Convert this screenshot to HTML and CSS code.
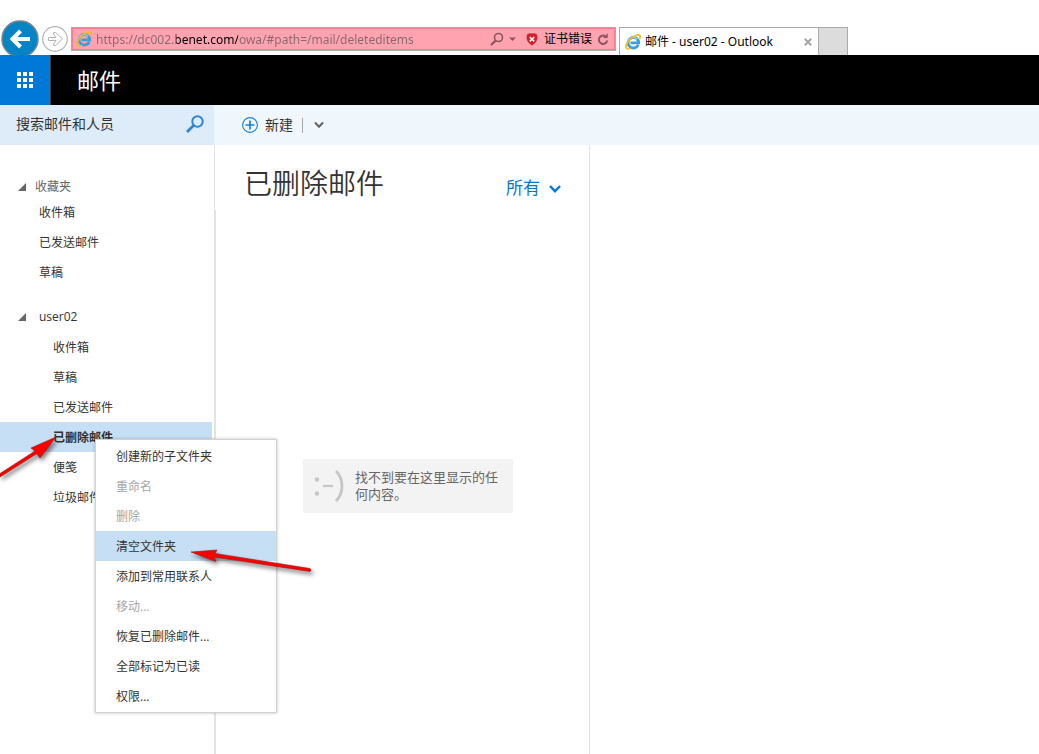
FILE: index.html
```html
<!DOCTYPE html>
<html lang="zh-CN">
<head>
<meta charset="utf-8">
<meta name="viewport" content="width=device-width, initial-scale=1">
<title>邮件 - user02 - Outlook</title>
<link rel="stylesheet" href="styles.css">
</head>
<body>
<svg class="defs" aria-hidden="true">
  <symbol id="ie" viewBox="0 0 16 16">
    <path d="M13.300 10.800A5.300 5.300 0 1 1 13.700 8.800H5.500" fill="none" stroke="#3a9fd8" stroke-width="2.800"/>
    <path d="M3 7A5.400 5.400 0 0 1 12.200 5.300" fill="none" stroke="#8fd3f5" stroke-width="1.200"/>
    <path d="M2.200 14.800C-.4 13.600 1.600 8.400 6.200 4.400S15.200-.2 15.200 2.600c0 .8-.3 1.600-.7 2.300" fill="none" stroke="#f3b81c" stroke-width="1.700"/>
    <path d="M2.200 14.800c1 .5 2.500 0 3.800-.8" fill="none" stroke="#f3b81c" stroke-width="1.300"/>
  </symbol>
</svg>

<header class="browser">
  <button class="back" aria-label="后退">
    <svg viewBox="0 0 38 38"><circle cx="19" cy="19" r="18" fill="#0484c4" stroke="#77838a" stroke-width="1.500"/><path d="M29 19H11M19.500 11 11.500 19l8 8" fill="none" stroke="#fff" stroke-width="4"/></svg>
  </button>
  <button class="forward" aria-label="前进">
    <svg viewBox="0 0 26 26"><circle cx="13" cy="13" r="12.300" fill="#fff" stroke="#b4b4b4" stroke-width="1.200"/><path d="M6.500 11.500h7.500L11.500 8V6.500h2.200L20.500 13l-6.800 6.500h-2.200V18l2.500-3.500H6.500z" fill="#fff" stroke="#b4b4b4"/></svg>
  </button>
  <div class="address">
    <svg class="ie"><use href="#ie"/></svg>
    <input class="url" type="text" aria-label="地址" value="https://dc002.benet.com/owa/#path=/mail/deleteditems">
    <button class="find" aria-label="搜索">
      <svg viewBox="0 0 28 16"><circle cx="8.500" cy="6.500" r="4" fill="none" stroke="#8c545c" stroke-width="1.600"/><path d="M5.800 9.500 1 14" stroke="#8c545c" stroke-width="2.200"/><path d="M19 6.500h7L22.500 10z" fill="#8c545c"/></svg>
    </button>
    <button class="cert">
      <svg viewBox="0 0 12 14"><path d="M6 2c1.500-.6 3.300-.5 4.500.5C11.800 7 10.500 10.500 6 13 1.500 10.500.2 7 1.500 2.500 2.700 1.500 4.500 1.400 6 2z" fill="#d61f26" stroke="#b3161c" stroke-width=".6"/><path d="m3.800 5 4.400 4.400m0-4.400L3.800 9.400" stroke="#fff" stroke-width="1.500"/></svg>
      <span>证书错误</span>
    </button>
    <button class="reload" aria-label="刷新">
      <svg viewBox="0 0 12 14"><path d="M8.200 4.100A4.200 4.200 0 1 0 10.200 8.500" fill="none" stroke="#8c545c" stroke-width="1.900"/><path d="M6 6.100h4.700V1.300z" fill="#8c545c"/></svg>
    </button>
  </div>
  <div class="tab">
    <svg class="ie"><use href="#ie"/></svg>
    <span class="tab-title">邮件 - user02 - Outlook</span>
    <button class="tab-close" aria-label="关闭标签页"><svg viewBox="0 0 8 8"><path d="m.8.8 6.400 6.400m0-6.400L.8 7.200" stroke="#a6a6a6" stroke-width="2"/></svg></button>
  </div>
  <button class="new-tab" aria-label="新建标签页"></button>
</header>

<div class="suite">
  <button class="launcher" aria-label="应用启动器">
    <svg viewBox="0 0 16 16" fill="#fff"><path d="M0 0h4v4H0zM6 0h4v4H6zM12 0h4v4h-4zM0 6h4v4H0zM6 6h4v4H6zM12 6h4v4h-4zM0 12h4v4H0zM6 12h4v4H6zM12 12h4v4h-4z"/></svg>
  </button>
  <span class="suite-title">邮件</span>
</div>

<div class="commands">
  <div class="search">
    <input type="text" placeholder="搜索邮件和人员" aria-label="搜索邮件和人员">
    <button aria-label="搜索"><svg viewBox="0 0 18 18"><circle cx="11.500" cy="6.500" r="5.200" fill="none" stroke="#2b88d8" stroke-width="2"/><path d="M7.800 10.200 1 17" stroke="#2b88d8" stroke-width="2.800"/></svg></button>
  </div>
  <div class="toolbar">
    <button class="new">
      <svg viewBox="0 0 16 16" fill="none" stroke="#1a80d8"><circle cx="8" cy="8" r="7.400" stroke-width="1.100"/><path d="M8 3.500v9M3.500 8h9" stroke-width="1.700"/></svg>
      <span>新建</span>
    </button>
    <button class="more" aria-label="更多"><svg viewBox="0 0 10 8"><path d="m1 1.500 4 4.300 4-4.300" fill="none" stroke="#666" stroke-width="2"/></svg></button>
  </div>
</div>

<main class="panes">
  <nav class="folders" aria-label="文件夹">
    <button class="group favorites"><svg viewBox="0 0 8 8"><path d="M8 0v8H0z" fill="#666"/></svg><span>收藏夹</span></button>
    <ul class="list">
      <li><a href="#">收件箱</a></li>
      <li><a href="#">已发送邮件</a></li>
      <li><a href="#">草稿</a></li>
    </ul>
    <button class="group account"><svg viewBox="0 0 8 8"><path d="M8 0v8H0z" fill="#666"/></svg><span>user02</span></button>
    <ul class="list nested">
      <li><a href="#">收件箱</a></li>
      <li><a href="#">草稿</a></li>
      <li><a href="#">已发送邮件</a></li>
      <li class="selected">
        <a href="#" aria-current="page">已删除邮件</a>
        <div class="menu" role="menu">
          <button role="menuitem">创建新的子文件夹</button>
          <button role="menuitem" disabled>重命名</button>
          <button role="menuitem" disabled>删除</button>
          <button role="menuitem" class="active">清空文件夹</button>
          <button role="menuitem">添加到常用联系人</button>
          <button role="menuitem" disabled>移动...</button>
          <button role="menuitem">恢复已删除邮件...</button>
          <button role="menuitem">全部标记为已读</button>
          <button role="menuitem">权限...</button>
        </div>
      </li>
      <li><a href="#">便笺</a></li>
      <li><a href="#">垃圾邮件</a></li>
    </ul>
  </nav>
  <section class="messages">
    <div class="messages-head">
      <h1>已删除邮件</h1>
      <button class="filter"><span>所有</span><svg viewBox="0 0 12 10"><path d="m1 3 5 5.200L11 3" fill="none" stroke="#0078d7" stroke-width="2.400"/></svg></button>
    </div>
    <div class="empty">
      <svg viewBox="0 0 30 32" aria-hidden="true"><circle cx="3" cy="9.500" r="2.200" fill="#c6c6c6"/><circle cx="3" cy="23.500" r="2.200" fill="#c6c6c6"/><path d="M9 16h10" stroke="#c6c6c6" stroke-width="2.200"/><path d="M22 1c8 8 8 22 0 30" fill="none" stroke="#c6c6c6" stroke-width="2.800"/></svg>
      <p>找不到要在这里显示的任何内容。</p>
    </div>
  </section>
  <section class="reading" aria-label="阅读窗格"></section>
</main>

<svg class="arrow arrow-folder" viewBox="0 0 70 56" aria-hidden="true"><path d="M0 40.500 35 18 31 15 56 4 40 25 37 20.500 0 44z" fill="#f00" stroke="#8f1919" stroke-width=".6"/></svg>
<svg class="arrow arrow-menu" viewBox="0 0 130 40" aria-hidden="true"><path d="M1 8 27 6 25 9.500 120 24.500Q122 26 120 27.500L24 13l2 4.500z" fill="#f00" stroke="#8f1919" stroke-width=".6"/></svg>
</body>
</html>
```

FILE: styles.css
```css
* { box-sizing: border-box; }

body {
  margin: 0;
  min-height: 100vh;
  display: flex;
  flex-direction: column;
  position: relative;
  overflow-x: hidden;
  background: #fff;
  color: #333;
  font: 12px/18px "Open Sans", "Noto Sans CJK SC", sans-serif;
}

button, input {
  margin: 0;
  padding: 0;
  border: 0;
  background: none;
  color: inherit;
  font: inherit;
  text-align: left;
}

svg { display: block; flex: none; }
ul { margin: 0; padding: 0; list-style: none; }
a { color: inherit; text-decoration: none; }
.defs { position: absolute; width: 0; height: 0; }

/* Browser frame */
.browser {
  display: flex;
  align-items: flex-start;
  height: 55px;
  padding: 20px 191px 0 1px;
  overflow: hidden;
  font-family: "Noto Sans", "Noto Sans CJK SC", sans-serif;
}
.back svg { width: 38px; height: 38px; }
.forward { margin: 6px 3px 0; }
.forward svg { width: 26px; height: 26px; }
.ie { width: 16px; height: 16px; }
.address {
  flex: 1;
  min-width: 0;
  display: flex;
  align-items: center;
  height: 24px;
  margin: 7px 3px 0 0;
  padding: 0 6px 0 4px;
  border: 1px solid #ababab;
  background: #ffa3b1;
  box-shadow: inset 0 0 0 1px #fb7c8e;
  color: #000;
}
.url {
  flex: 1;
  min-width: 0;
  height: 20px;
  margin-left: 4px;
  color: transparent;
  background: linear-gradient(90deg, #85696d 80px, #000 80px 142px, #85696d 142px);
  background-clip: text;
  -webkit-background-clip: text;
}
.find svg { width: 28px; height: 16px; }
.cert { display: flex; align-items: center; gap: 6px; margin-left: 8px; }
.cert svg { width: 12px; height: 14px; }
.reload { margin-left: 5px; }
.reload svg { width: 12px; height: 14px; }
.tab {
  display: flex;
  align-items: center;
  width: 200px;
  height: 28px;
  margin-top: 7px;
  padding: 0 6px 0 5px;
  border: 1px solid #ababab;
  border-bottom: 0;
  color: #000;
}
.tab-title { flex: 1; margin-left: 4px; white-space: nowrap; }
.tab-close svg { width: 8px; height: 8px; }
.new-tab {
  width: 29px;
  height: 28px;
  margin-top: 7px;
  border: 1px solid #ababab;
  border-left: 0;
  border-bottom: 0;
  background: #dcdcdc;
}

/* Suite header */
.suite { display: flex; align-items: center; height: 50px; background: #000; color: #fff; }
.launcher {
  display: flex;
  justify-content: center;
  align-items: center;
  width: 51px;
  height: 50px;
  border-right: 1px solid #444;
  background: #0078d7;
}
.launcher svg { width: 16px; height: 16px; }
.suite-title { margin-left: 26px; font-size: 22px; line-height: 30px; }

/* Search and commands */
.commands { display: flex; height: 40px; background: #eff6fc; font-size: 14px; line-height: 20px; }
.search { display: flex; align-items: center; width: 214px; padding: 0 10px 3px 16px; background: #deecf9; }
.search input { flex: 1; min-width: 0; height: 24px; }
.search input::placeholder { color: #333; opacity: 1; }
.search svg { width: 18px; height: 18px; }
.toolbar { display: flex; align-items: center; padding-left: 28px; }
.new { display: flex; align-items: center; gap: 7px; }
.new svg { width: 16px; height: 16px; }
.more { height: 15px; margin-left: 9px; padding: 0 11px; border-left: 1px solid #a6a6a6; }
.more svg { width: 10px; height: 8px; }

/* Folder tree */
.panes { flex: 1; display: flex; }
.folders { width: 215px; padding-top: 32px; border-right: 1px solid #e3e3e3; }
.group { display: flex; align-items: center; padding-left: 18px; }
.group svg { width: 8px; height: 8px; }
.favorites { height: 20px; gap: 9px; color: #666; }
.account { height: 30px; gap: 13px; margin-top: 15px; }
.list { width: 212px; }
.list a { display: block; height: 30px; padding-left: 39px; line-height: 32px; }
.nested a { padding-left: 53px; }
.selected { position: relative; background: #c7dff4; }
.selected > a { font-weight: 700; }

.menu {
  position: absolute;
  z-index: 2;
  left: 95px;
  top: 17px;
  width: 182px;
  padding: 1px 0;
  border: 1px solid #d2d2d2;
  background: #fff;
  box-shadow: 0 0 3px rgba(0, 0, 0, .25);
}
.menu button { display: block; width: 100%; height: 30px; padding-left: 20px; line-height: 32px; }
.menu button:disabled { color: #a6a6a6; }
.menu .active { background: #c7dff4; }

/* Message list */
.messages {
  width: 375px;
  border-right: 1px solid #e3e3e3;
  background: linear-gradient(#e3e3e3, #e3e3e3) 0 65px / 1px 100% no-repeat;
}
.messages-head { display: flex; justify-content: space-between; align-items: flex-start; padding: 18px 28px 0 29px; }
h1 { margin: 0; font-size: 28px; font-weight: 350; line-height: 40px; }
.filter { display: flex; align-items: center; gap: 9px; margin-top: 12px; color: #0078d7; font-size: 17px; line-height: 26px; }
.filter svg { width: 12px; height: 10px; }
.empty {
  display: flex;
  align-items: center;
  gap: 11px;
  width: 210px;
  height: 54px;
  margin: 256px auto 0 88px;
  padding: 0 14px 0 11px;
  background: #f3f3f3;
  color: #666;
  font-size: 13px;
  line-height: 17px;
}
.empty svg { width: 30px; height: 32px; }
.empty p { margin: 0; }
.reading { flex: 1; }

/* Annotation arrows */
.arrow { position: absolute; z-index: 3; filter: drop-shadow(2px 3px 2px rgba(0, 0, 0, .5)); pointer-events: none; }
.arrow-folder { left: 0; top: 433px; width: 70px; height: 56px; }
.arrow-menu { left: 190px; top: 544px; width: 130px; height: 40px; }
```
